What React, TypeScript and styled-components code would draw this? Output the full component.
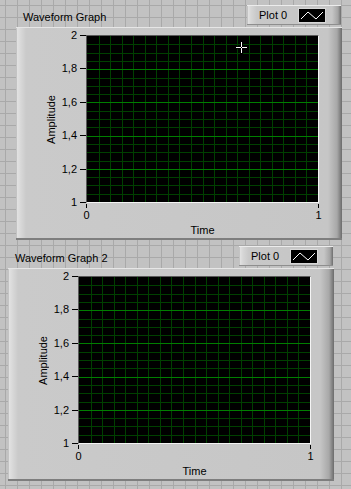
import React from 'react';
import styled, { createGlobalStyle } from 'styled-components';

const GlobalStyle = createGlobalStyle`
  html, body {
    margin: 0;
    padding: 0;
  }
  body {
    background: #c0c0c0;
    font-family: "Liberation Sans", Arial, sans-serif;
    color: #000;
  }
`;

const PLOT_W = 233;
const PLOT_H = 168;

const Canvas = styled.div`
  width: 351px;
  height: 489px;
  overflow: hidden;
  box-sizing: border-box;
  padding-top: 5px;
  display: flex;
  flex-direction: column;
  background-color: #c2c2c2;
  background-image: linear-gradient(to right, #a9a9a9 1px, transparent 1px),
    linear-gradient(to bottom, #a9a9a9 1px, transparent 1px);
  background-size: 12px 12px;
  background-position: 5px 5px;
`;

const GraphBlock = styled.section<{ $left: number; $top: number }>`
  width: 326px;
  margin-left: ${(p) => p.$left}px;
  margin-top: ${(p) => p.$top}px;
`;

const Header = styled.div`
  height: 22px;
  display: flex;
  justify-content: space-between;
  align-items: flex-end;
`;

const Caption = styled.span`
  font-size: 11px;
  line-height: 13px;
  padding: 0 0 3px 7px;
`;

const Legend = styled.div`
  width: 94px;
  height: 20px;
  margin: 0 1px 2px 0;
  box-sizing: border-box;
  display: flex;
  align-items: center;
  padding-left: 12px;
  border-top: 1px solid #ececec;
  border-bottom: 1px solid #8e8e8e;
  background: linear-gradient(
    to right,
    #a6a6a6 0,
    #e2e2e2 1px,
    #d6d6d6 4px,
    #c8c8c8 10px,
    #c6c6c6 calc(100% - 9px),
    #a4a4a4 calc(100% - 3px),
    #6e6e6e 100%
  );
`;

const LegendName = styled.span`
  width: 39px;
  font-size: 11px;
  line-height: 13px;
`;

const Swatch = styled.svg`
  display: block;
  width: 28px;
  height: 15px;
`;

const Panel = styled.div`
  width: 326px;
  height: 213px;
  box-sizing: border-box;
  display: grid;
  grid-template-columns: 70px ${PLOT_W}px 1fr;
  grid-template-rows: 7px ${PLOT_H}px 1fr;
  border-top: 1px solid #e6e6e6;
  border-bottom: 2px solid #7e7e7e;
  background: linear-gradient(
    to right,
    #a4a4a4 0,
    #e2e2e2 1px,
    #dadada 4px,
    #cacaca 10px,
    #c6c6c6 calc(100% - 14px),
    #a8a8a8 calc(100% - 5px),
    #6c6c6c 100%
  );
`;

const YAxis = styled.div`
  grid-column: 1;
  grid-row: 2;
  display: flex;
  justify-content: flex-end;
`;

const AxisTitleY = styled.span`
  align-self: center;
  writing-mode: vertical-rl;
  transform: rotate(180deg);
  font-size: 11px;
  line-height: 13px;
  margin-right: 1px;
`;

const YTicks = styled.div`
  width: 27px;
  display: flex;
  flex-direction: column;
  justify-content: space-between;
`;

const YTick = styled.div`
  height: 1px;
  display: flex;
  align-items: center;
  justify-content: flex-end;
  gap: 3px;
`;

const TickText = styled.span`
  font-size: 11px;
  line-height: 13px;
  white-space: nowrap;
`;

const HMark = styled.i`
  width: 6px;
  height: 1px;
  background: #000;
`;

const Plot = styled.div`
  position: relative;
  grid-column: 2;
  grid-row: 2;
  box-sizing: border-box;
  border-style: solid;
  border-width: 1px;
  border-color: #5a5a5a #f4f4f4 #f4f4f4 #5a5a5a;
  background: #000;
  overflow: hidden;
`;

const GridSvg = styled.svg`
  display: block;
  width: 100%;
  height: 100%;
`;

const CursorMark = styled.svg<{ $x: number; $y: number }>`
  position: absolute;
  left: ${(p) => p.$x}px;
  top: ${(p) => p.$y}px;
  width: 13px;
  height: 13px;
`;

const XAxis = styled.div`
  grid-column: 2;
  grid-row: 3;
  display: flex;
  flex-direction: column;
  align-items: center;
`;

const XTicks = styled.div`
  align-self: stretch;
  display: flex;
  justify-content: space-between;
`;

const XTick = styled.div`
  width: 1px;
  display: flex;
  flex-direction: column;
  align-items: center;
`;

const VMark = styled.i`
  width: 1px;
  height: 4px;
  margin-top: 1px;
  margin-bottom: 1px;
  background: #000;
`;

const AxisTitleX = styled.span`
  font-size: 11px;
  line-height: 13px;
  margin-top: 2px;
`;

const yLabels = ['2', '1,8', '1,6', '1,4', '1,2', '1'];

function PlotGrid() {
  const w = PLOT_W - 2;
  const h = PLOT_H - 2;
  const cols = Array.from({ length: 19 }, (_, i) => Math.round(((i + 1) * w) / 20) + 0.5);
  const rows = Array.from({ length: 19 }, (_, i) => ({
    y: Math.round(((i + 1) * h) / 20) + 0.5,
    major: (i + 1) % 4 === 0,
  }));
  return (
    <GridSvg viewBox={`0 0 ${w} ${h}`} shapeRendering="crispEdges">
      {cols.map((x) => (
        <line key={`v${x}`} x1={x} y1={0} x2={x} y2={h} stroke="#004000" strokeWidth={1} />
      ))}
      {rows
        .filter((r) => !r.major)
        .map((r) => (
          <line key={`h${r.y}`} x1={0} y1={r.y} x2={w} y2={r.y} stroke="#004000" strokeWidth={1} />
        ))}
      {rows
        .filter((r) => r.major)
        .map((r) => (
          <line key={`m${r.y}`} x1={0} y1={r.y} x2={w} y2={r.y} stroke="#007e00" strokeWidth={1} />
        ))}
    </GridSvg>
  );
}

const PlotSwatch = () => (
  <Swatch viewBox="0 0 28 15" shapeRendering="crispEdges">
    <rect x={0.5} y={0.5} width={27} height={14} fill="#000" stroke="#d8d8d8" />
    <polyline
      points="3,11 10,4 18,11 25,4"
      fill="none"
      stroke="#fff"
      strokeWidth={1}
      shapeRendering="auto"
    />
  </Swatch>
);

const Crosshair = ({ x, y }: { x: number; y: number }) => (
  <CursorMark $x={x} $y={y} viewBox="0 0 13 13" shapeRendering="crispEdges">
    <path d="M5 0h3v5h5v3h-5v5h-3v-5h-5v-3h5z" fill="#000" />
    <path d="M6 1h1v11h-1zM1 6h11v1h-11z" fill="#fff" />
    <rect x={6} y={6} width={1} height={1} fill="#000" />
  </CursorMark>
);

type GraphProps = {
  title: string;
  left: number;
  top: number;
  cursor?: { x: number; y: number };
};

const WaveformGraph = ({ title, left, top, cursor }: GraphProps) => (
  <GraphBlock $left={left} $top={top}>
    <Header>
      <Caption>{title}</Caption>
      <Legend>
        <LegendName>Plot 0</LegendName>
        <PlotSwatch />
      </Legend>
    </Header>
    <Panel>
      <YAxis>
        <AxisTitleY>Amplitude</AxisTitleY>
        <YTicks>
          {yLabels.map((l) => (
            <YTick key={l}>
              <TickText>{l}</TickText>
              <HMark />
            </YTick>
          ))}
        </YTicks>
      </YAxis>
      <Plot>
        <PlotGrid />
        {cursor && <Crosshair x={cursor.x} y={cursor.y} />}
      </Plot>
      <XAxis>
        <XTicks>
          <XTick>
            <VMark />
            <TickText>0</TickText>
          </XTick>
          <XTick>
            <VMark />
            <TickText>1</TickText>
          </XTick>
        </XTicks>
        <AxisTitleX>Time</AxisTitleX>
      </XAxis>
    </Panel>
  </GraphBlock>
);

export default function App() {
  return (
    <>
      <GlobalStyle />
      <Canvas>
        <WaveformGraph title="Waveform Graph" left={16} top={0} cursor={{ x: 148, y: 5 }} />
        <WaveformGraph title="Waveform Graph 2" left={8} top={6} />
      </Canvas>
    </>
  );
}
